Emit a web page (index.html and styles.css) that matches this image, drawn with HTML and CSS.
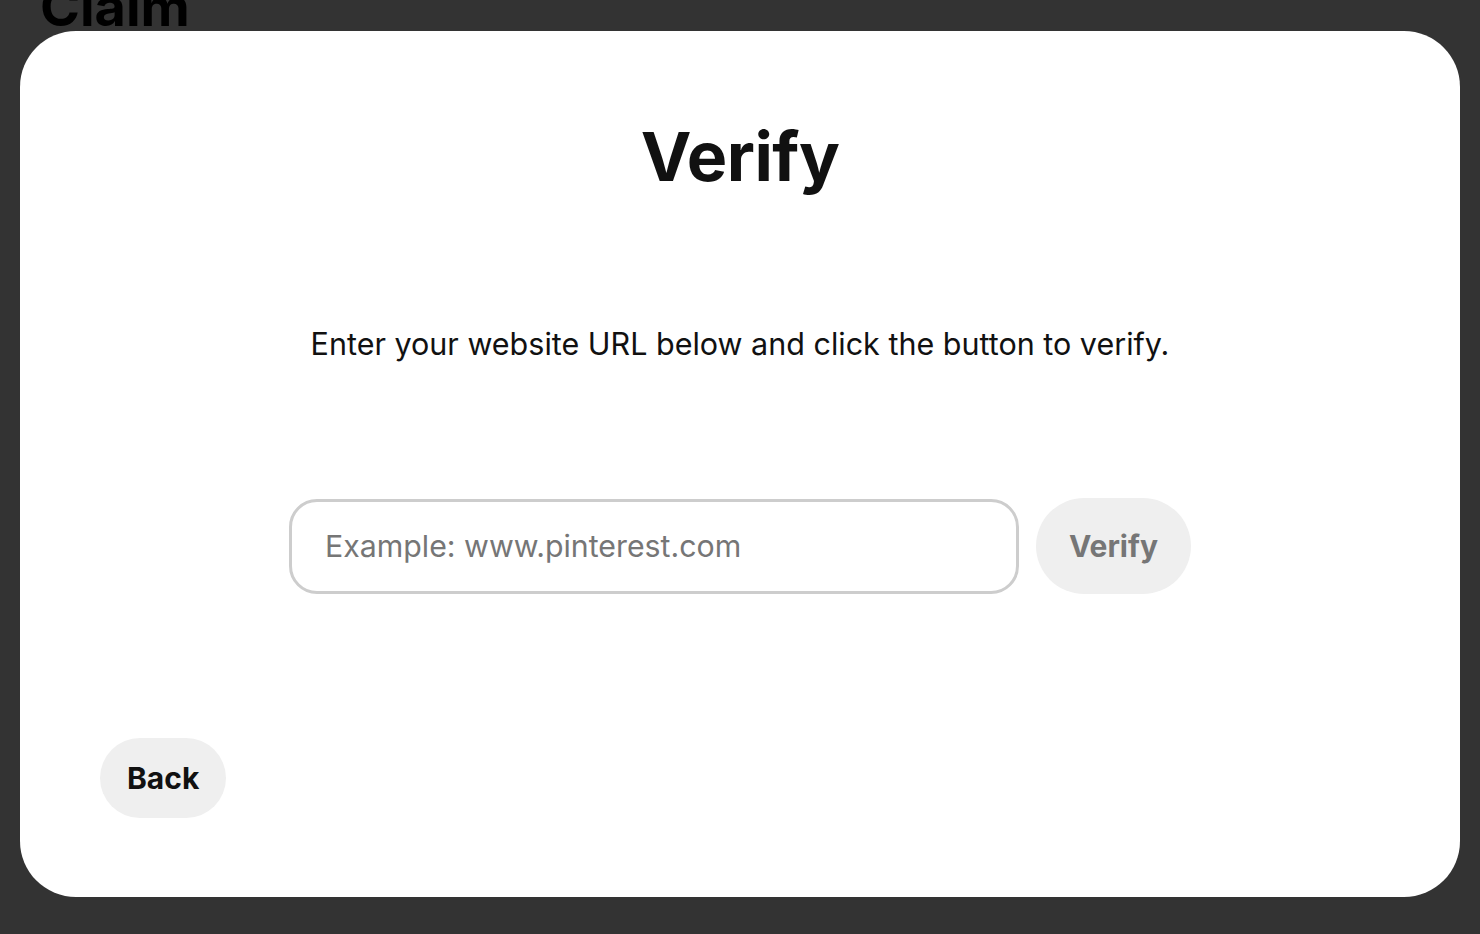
FILE: index.html
```html
<!DOCTYPE html>
<html lang="en">
<head>
    <meta charset="UTF-8">
    <meta name="viewport" content="width=device-width, initial-scale=1.0">
    <title>Claim - Verify</title>
    <link rel="stylesheet" href="styles.css">
</head>
<body>

    <div class="page">
        <h2 class="page-title">Claim</h2>
    </div>

    <div class="overlay">
        <div class="modal">
            <h1>Verify</h1>
            <p class="hint">Enter your website URL below and click the button to verify.</p>

            <div class="verify-row">
                <input type="text" id="urlInput" placeholder="Example: www.pinterest.com">
                <button class="btn btn-verify" disabled>Verify</button>
            </div>

            <div class="footer">
                <button class="btn btn-back">Back</button>
            </div>
        </div>
    </div>

</body>
</html>
```

FILE: styles.css
```css
body {
    font-family: Inter, 'Noto Sans', sans-serif;
    margin: 0;
    padding: 0;
    height: 100vh;
    background-color: #333;
    color: #111;
    overflow: hidden;
}

.page {
    padding: 0 40px;
}

.page-title {
    margin: -20px 0 0;
    font-size: 54px;
    font-weight: 700;
    line-height: 1;
    color: #000;
}

.overlay {
    position: absolute;
    top: 0;
    left: 0;
    right: 0;
    bottom: 0;
    padding: 31px 20px 37px;
    display: flex;
}

.modal {
    flex: 1;
    background-color: #fff;
    border-radius: 56px;
    display: flex;
    flex-direction: column;
    align-items: center;
    padding: 83px 80px 79px;
}

h1 {
    margin: 0;
    font-size: 68px;
    font-weight: 700;
    line-height: 84px;
    letter-spacing: -0.5px;
}

.hint {
    margin: 126px 0 0;
    font-size: 30.5px;
    line-height: 40px;
}

.verify-row {
    display: flex;
    align-items: center;
    gap: 17px;
    margin-top: 134px;
}

input {
    width: 730px;
    height: 95px;
    box-sizing: border-box;
    padding: 0 33px;
    border: 3px solid #cdcdcd;
    border-radius: 28px;
    font-family: inherit;
    font-size: 30.3px;
    color: #111;
    outline: none;
}

input::placeholder {
    color: #767676;
}

.btn {
    border: none;
    font-family: inherit;
    font-weight: 700;
    font-size: 30px;
    border-radius: 999px;
    background-color: #efefef;
    cursor: pointer;
}

.btn-verify {
    height: 96px;
    padding: 0 33px;
    color: #767676;
}

.footer {
    margin-top: auto;
    align-self: stretch;
}

.btn-back {
    height: 80px;
    padding: 0 27px;
    color: #111;
}
```
